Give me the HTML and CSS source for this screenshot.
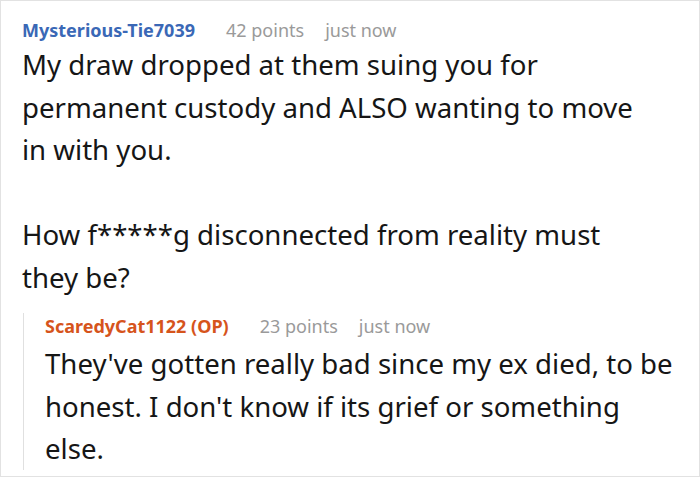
FILE: index.html
```html
<!DOCTYPE html>
<html>
<head>
<meta charset="utf-8">
<link rel="stylesheet" href="styles.css">
</head>
<body>
<div class="thread">
  <div class="comment">
    <div class="meta">
      <span class="author">Mysterious-Tie7039</span>
      <span class="info">42 points</span>
      <span class="info">just now</span>
    </div>
    <div class="body">
      <p>My draw dropped at them suing you for permanent custody and ALSO wanting to move in with you.</p>
      <p>How f*****g disconnected from reality must they be?</p>
    </div>
  </div>
  <div class="reply">
    <div class="meta">
      <span class="author op">ScaredyCat1122 (OP)</span>
      <span class="info">23 points</span>
      <span class="info">just now</span>
    </div>
    <div class="body">
      <p>They've gotten really bad since my ex died, to be honest. I don't know if its grief or something else.</p>
    </div>
  </div>
</div>
</body>
</html>
```
FILE: styles.css
```css
html, body {
  margin: 0;
  padding: 0;
  background: #fff;
}
body {
  font-family: "Noto Sans", "Open Sans", sans-serif;
  color: #161616;
}
.thread {
  box-sizing: border-box;
  width: 700px;
  height: 477px;
  border: 1px solid #e2e2e2;
  padding: 16px 14px 0 21px;
  overflow: hidden;
}
.comment {
  padding-right: 30px;
}
.meta {
  display: flex;
  font-size: 18px;
  line-height: 26px;
}
.author {
  font-weight: bold;
  color: #3a68b6;
  margin-right: 31px;
}
.author.op {
  color: #d6541c;
}
.info {
  color: #9a9a9a;
  margin-right: 21px;
}
.body {
  font-size: 27.6px;
  line-height: 42.5px;
}
.body p {
  margin: 0 0 42.5px;
}
.body p:last-child {
  margin-bottom: 0;
}
.reply {
  margin-top: 26px;
  margin-left: 1px;
  border-left: 1px solid #e0e0e0;
  padding-left: 21px;
}
.reply .meta {
  margin-top: -11px;
}
.reply .body {
  margin-top: 3px;
  margin-bottom: -12px;
}
```
